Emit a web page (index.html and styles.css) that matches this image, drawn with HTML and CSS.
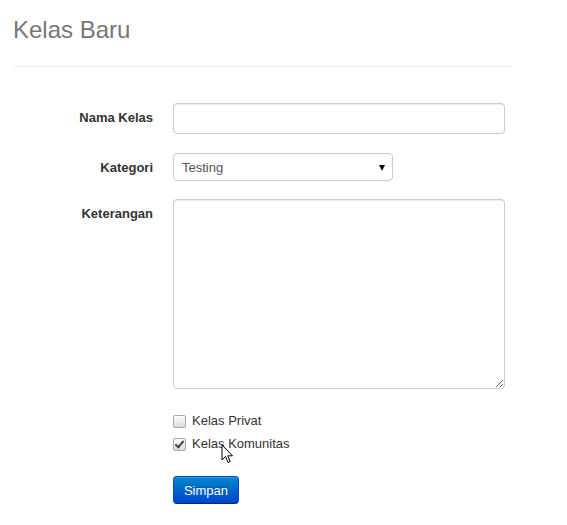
FILE: index.html
```html
<!DOCTYPE html>
<html lang="id">
<head>
  <meta charset="UTF-8">
  <meta name="viewport" content="width=device-width, initial-scale=1">
  <title>Kelas Baru</title>
  <link rel="stylesheet" href="styles.css">
</head>
<body>
  <div class="page">
    <h1>Kelas Baru</h1>
    <hr>

    <form class="form-horizontal">
      <div class="form-group">
        <label class="control-label" for="nama">Nama Kelas</label>
        <input type="text" id="nama" class="input-wide">
      </div>

      <div class="form-group group-select">
        <label class="control-label" for="kategori">Kategori</label>
        <div class="select-wrap">
          <select id="kategori">
            <option>Testing</option>
          </select>
        </div>
      </div>

      <div class="form-group group-area">
        <label class="control-label" for="keterangan">Keterangan</label>
        <textarea id="keterangan"></textarea>
      </div>

      <div class="controls">
        <label class="checkbox"><input type="checkbox"> Kelas Privat</label>
        <label class="checkbox"><input type="checkbox" checked> Kelas Komunitas</label>
        <button type="submit" class="btn-primary">Simpan</button>
      </div>
    </form>

    <!-- mouse pointer seen in the screenshot -->
    <svg class="cursor" width="13" height="21" viewBox="0 0 13 21">
      <path d="M1 1 L1 16 L4.5 12.5 L7 18.5 L9.2 17.6 L6.8 11.8 L11.5 11.8 Z" fill="#fff" stroke="#000" stroke-width="1"/>
    </svg>
  </div>
</body>
</html>
```

FILE: styles.css
```css
body {
  margin: 0;
  font-family: "Liberation Sans", Arial, sans-serif;
  font-size: 13px;
  color: #333;
  background: #fff;
}
.page {
  position: relative;
  width: 499px;
  padding: 17px 13px 0;
}
h1 {
  margin: 0;
  font-size: 24px;
  line-height: 26px;
  font-weight: normal;
  color: #777;
}
hr {
  margin: 23px 0 0;
  border: 0;
  border-top: 1px solid #eee;
}
.form-horizontal {
  padding-top: 36px;
}
.form-group {
  display: flex;
  align-items: flex-start;
  margin-bottom: 19px;
}
.group-select {
  margin-bottom: 18px;
}
.group-area {
  margin-bottom: 23px;
}
.control-label {
  width: 140px;
  margin-right: 20px;
  padding-top: 6px;
  text-align: right;
  font-weight: bold;
  line-height: 18px;
}
input[type="text"], textarea, select {
  box-sizing: border-box;
  font-family: inherit;
  font-size: 13px;
  color: #555;
  background: #fff;
  border: 1px solid #ccc;
  border-radius: 4px;
  box-shadow: inset 0 1px 1px rgba(0,0,0,0.075);
  outline: none;
}
.input-wide {
  width: 332px;
  height: 31px;
  padding: 4px 8px;
}
.select-wrap {
  position: relative;
}
.select-wrap::after {
  content: "";
  position: absolute;
  right: 8px;
  top: 12px;
  border-left: 3.5px solid transparent;
  border-right: 3.5px solid transparent;
  border-top: 6px solid #111;
  pointer-events: none;
}
select {
  -webkit-appearance: none;
  appearance: none;
  width: 220px;
  height: 28px;
  padding: 0 8px;
  box-shadow: none;
}
textarea {
  width: 332px;
  height: 190px;
  padding: 4px 8px;
  resize: vertical;
}
.controls {
  margin-left: 160px;
}
.checkbox {
  display: flex;
  align-items: center;
  height: 18px;
  margin-bottom: 5px;
  color: #333;
  line-height: 18px;
}
.checkbox input {
  -webkit-appearance: none;
  appearance: none;
  position: relative;
  box-sizing: border-box;
  width: 13px;
  height: 13px;
  margin: 0 6px 0 0;
  border: 1px solid #a8a8a8;
  border-radius: 2px;
  background: linear-gradient(#fdfdfd, #dcdcdc);
}
.checkbox input:checked::after {
  content: "";
  position: absolute;
  left: 3px;
  top: 0px;
  width: 3px;
  height: 7px;
  border-right: 2px solid #444;
  border-bottom: 2px solid #444;
  transform: rotate(40deg);
}
.btn-primary {
  margin-top: 18px;
  width: 66px;
  height: 28px;
  padding: 0;
  font-family: inherit;
  font-size: 13px;
  color: #fff;
  text-shadow: 0 -1px 0 rgba(0,0,0,0.25);
  background: linear-gradient(#0088cc, #0044cc);
  border: 1px solid #0044cc;
  border-bottom-color: #002a80;
  border-radius: 4px;
  box-shadow: inset 0 1px 0 rgba(255,255,255,0.2);
  cursor: pointer;
}
.cursor {
  position: absolute;
  left: 221px;
  top: 444px;
}
```
